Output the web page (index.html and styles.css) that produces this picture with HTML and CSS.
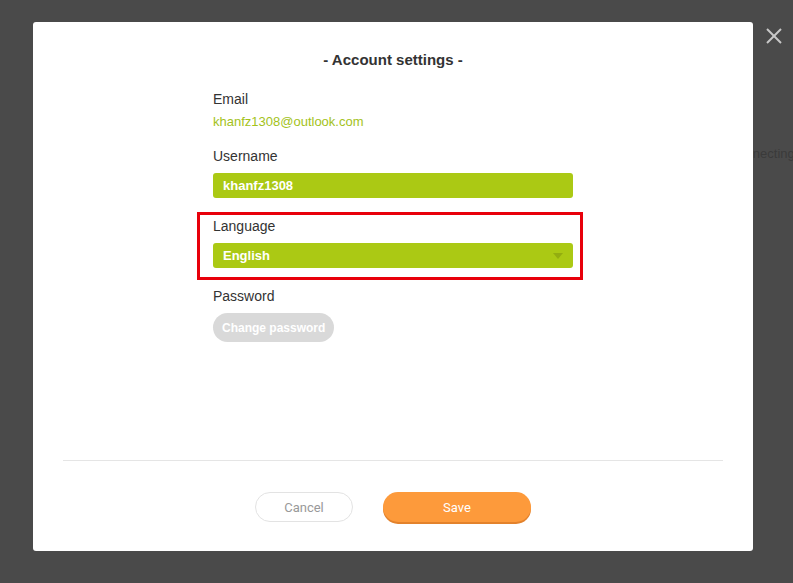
FILE: index.html
```html
<!DOCTYPE html>
<html lang="en">
<head>
    <meta charset="UTF-8">
    <meta name="viewport" content="width=device-width, initial-scale=1.0">
    <title>Account settings</title>
    <link rel="stylesheet" href="styles.css">
</head>
<body>
    <div class="backdrop">
        <span class="status">Connecting</span>
    </div>

    <div class="modal">
        <h1 class="title">- Account settings -</h1>

        <form class="settings">
            <div class="field">
                <div class="label">Email</div>
                <div class="email">khanfz1308@outlook.com</div>
            </div>

            <div class="field">
                <label class="label" for="username">Username</label>
                <input class="input" id="username" type="text" value="khanfz1308">
            </div>

            <div class="field highlight">
                <label class="label" for="language">Language</label>
                <div class="select">
                    <span>English</span>
                    <svg class="arrow" width="10" height="6" viewBox="0 0 10 6"><polygon points="0,0 10,0 5,6" fill="#93ad10"/></svg>
                </div>
            </div>

            <div class="field">
                <div class="label">Password</div>
                <button type="button" class="btn-pass">Change password</button>
            </div>
        </form>

        <hr class="divider">

        <div class="footer">
            <button type="button" class="btn-cancel">Cancel</button>
            <button type="button" class="btn-save">Save</button>
        </div>
    </div>

    <!-- close icon sits outside the dialog -->
    <svg class="close" width="18" height="18" viewBox="0 0 18 18">
        <line x1="2" y1="2" x2="16" y2="16" stroke="#c8c8c8" stroke-width="2"/>
        <line x1="16" y1="2" x2="2" y2="16" stroke="#c8c8c8" stroke-width="2"/>
    </svg>
</body>
</html>
```

FILE: styles.css
```css
* {
    box-sizing: border-box;
}
body {
    margin: 0;
    height: 583px;
    overflow: hidden;
    background: #4a4a4a;
    font-family: "Liberation Sans", Arial, sans-serif;
    color: #333;
    position: relative;
}
.backdrop {
    position: absolute;
    top: 145px;
    left: 729px;
    font-size: 13px;
    line-height: 18px;
    color: #3a3a3a;
    white-space: nowrap;
}
.modal {
    position: relative;
    margin: 22px 0 0 33px;
    width: 720px;
    height: 529px;
    background: #fff;
    border-radius: 3px;
    display: flex;
    flex-direction: column;
}
.title {
    margin: 0;
    padding-top: 29px;
    font-size: 15px;
    line-height: 18px;
    font-weight: bold;
    text-align: center;
    color: #333;
}
.settings {
    flex: 1;
    width: 360px;
    margin: 22px 0 0 180px;
    display: flex;
    flex-direction: column;
    gap: 20px;
    align-items: flex-start;
}
.field {
    width: 100%;
    display: flex;
    flex-direction: column;
    align-items: flex-start;
}
.field:first-child {
    margin-bottom: -2px;
}
.label {
    font-size: 14px;
    line-height: 16px;
    color: #333;
    margin-bottom: 9px;
}
.email {
    margin-top: -2px;
    font-size: 13px;
    line-height: 16px;
    color: #a3c21a;
}
.input,
.select {
    width: 100%;
    height: 25px;
    border: none;
    border-radius: 3px;
    background: #abc914;
    color: #fff;
    font-family: inherit;
    font-size: 13px;
    font-weight: bold;
    padding: 0 10px;
    outline: none;
}
.select {
    display: flex;
    align-items: center;
    justify-content: space-between;
}
.highlight {
    position: relative;
}
.highlight::after {
    content: "";
    position: absolute;
    top: -6px;
    bottom: -12px;
    left: -16px;
    right: -10px;
    border: 3px solid #e8000b;
}
.btn-pass {
    height: 29px;
    padding: 0 9px;
    border: none;
    border-radius: 15px;
    background: #d9d9d9;
    color: #fff;
    font-family: inherit;
    font-size: 12px;
    font-weight: bold;
}
.divider {
    margin: 0 30px;
    border: none;
    border-top: 1px solid #e5e5e5;
}
.footer {
    display: flex;
    justify-content: center;
    gap: 30px;
    padding: 31px 0 29px;
}
.btn-cancel,
.btn-save {
    height: 30px;
    border-radius: 15px;
    font-family: Roboto, "Liberation Sans", sans-serif;
    font-size: 13px;
}
.btn-cancel {
    width: 98px;
    background: #fff;
    border: 1px solid #e3e3e3;
    color: #999;
}
.btn-save {
    width: 148px;
    border: none;
    background: #fd9a3b;
    color: #fff;
    font-weight: 400;
    box-shadow: 0 2px 0 #e3822c;
}
.close {
    position: absolute;
    top: 27px;
    left: 765px;
}
```
